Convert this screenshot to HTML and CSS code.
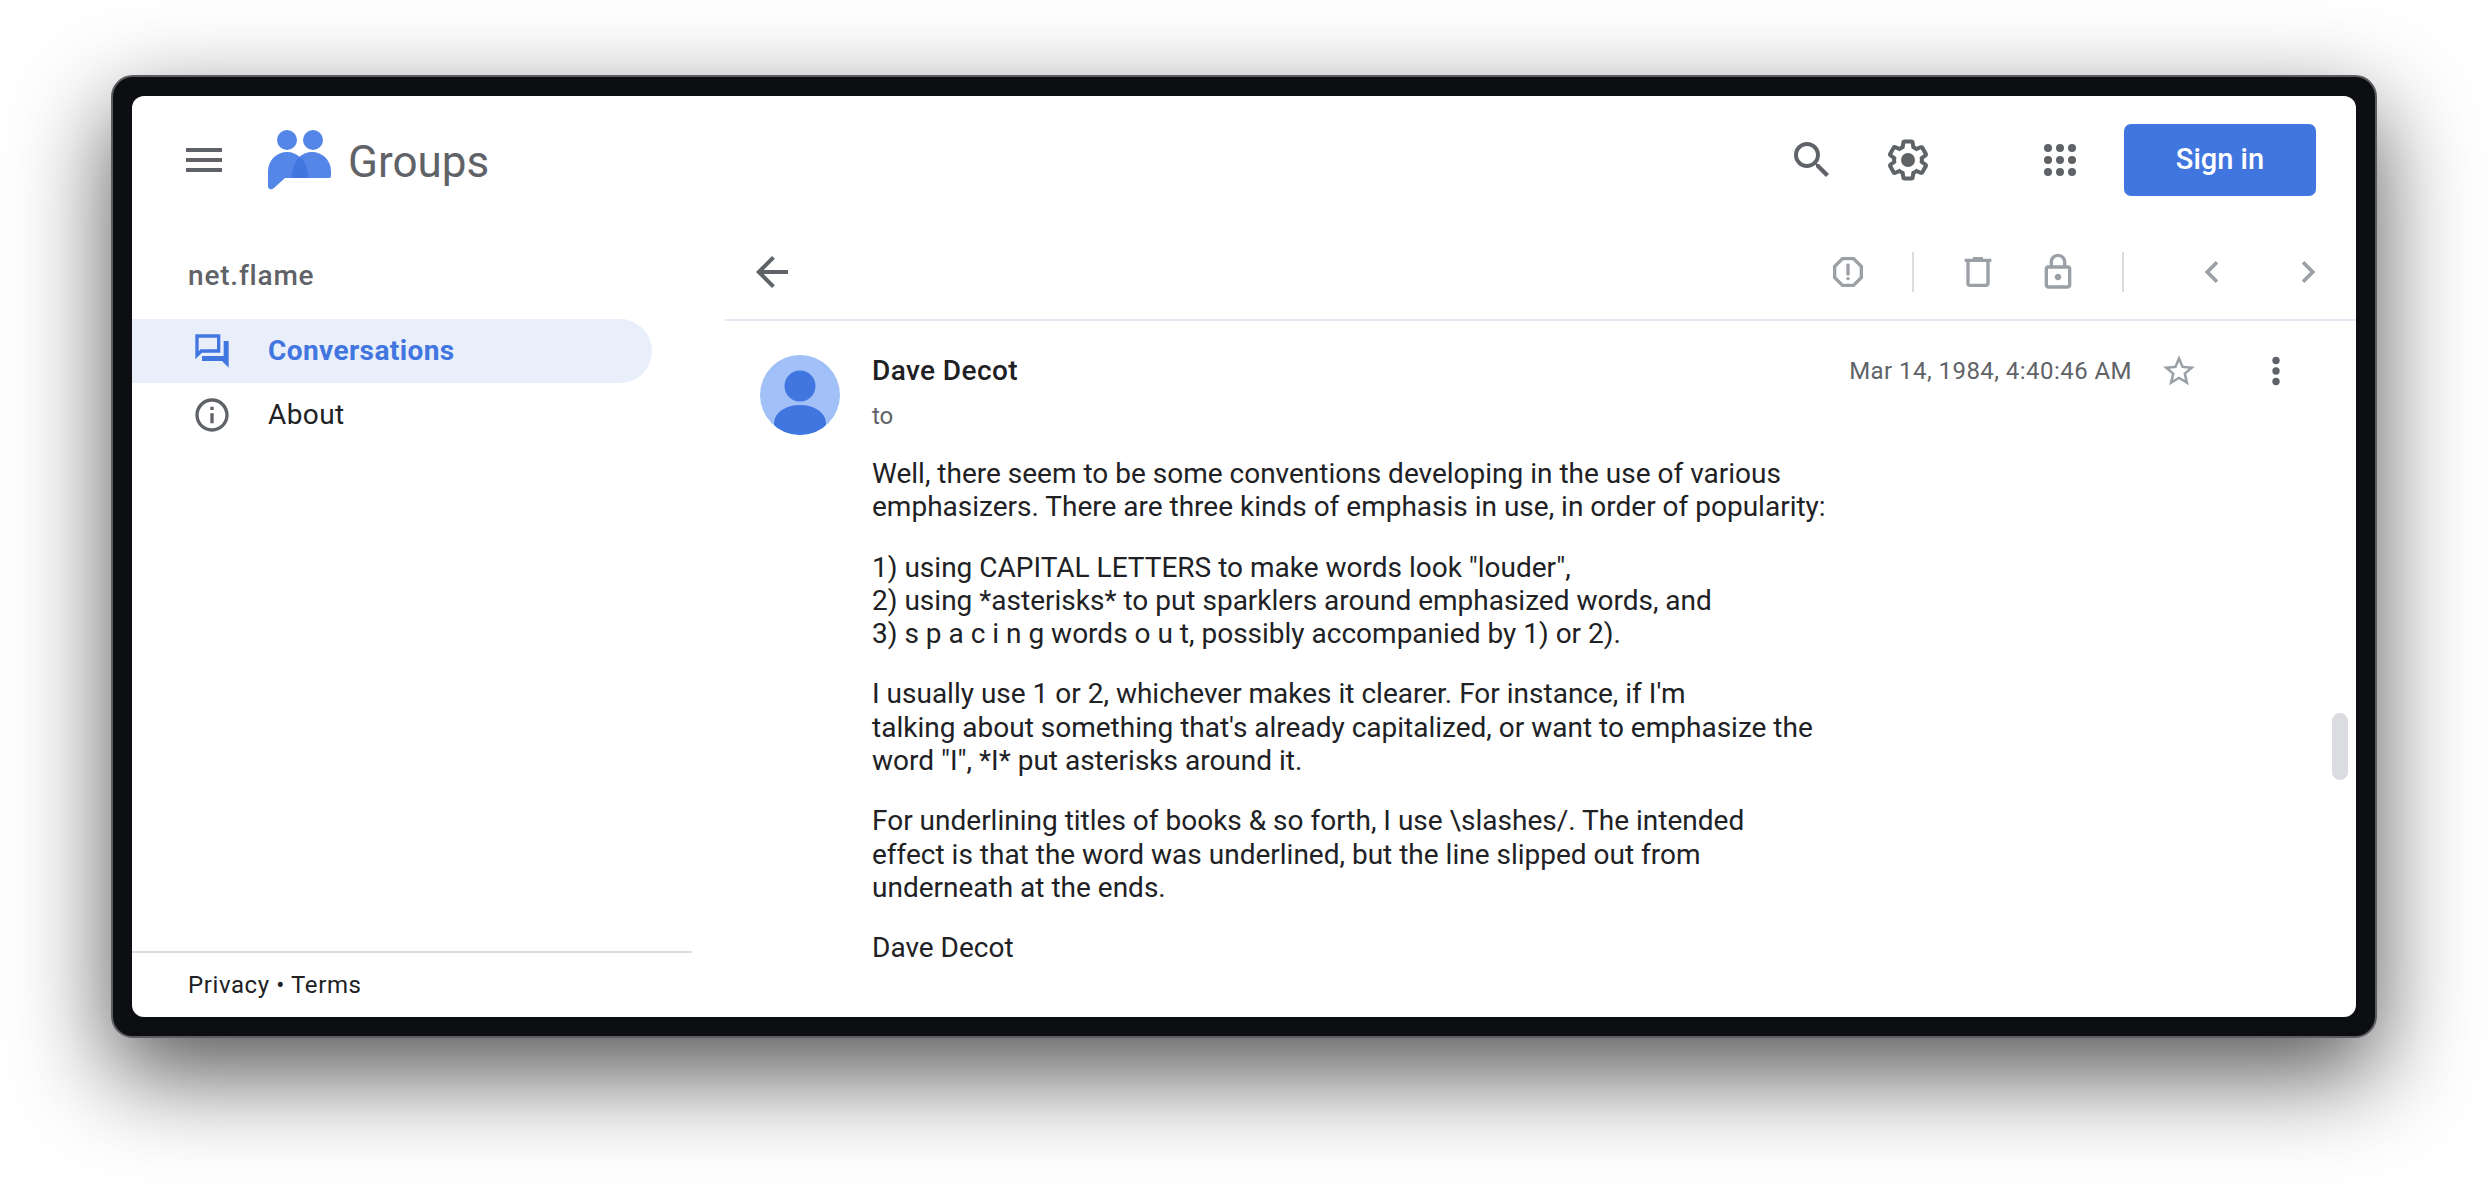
FILE: index.html
```html
<!DOCTYPE html>
<html lang="en">
<head>
<meta charset="utf-8">
<title>net.flame - Google Groups</title>
<link rel="stylesheet" href="styles.css">
</head>
<body>
<div class="frame">
  <div class="screen">
    <header class="topbar">
      <svg class="hamburger" viewBox="0 0 36 24"><path d="M0 0h36v4H0zM0 10h36v4H0zM0 20h36v4H0z"/></svg>
      <svg class="logo" viewBox="0 0 63 60">
        <circle class="logo-soft" cx="19" cy="10" r="10"/>
        <circle class="logo-soft" cx="45" cy="10" r="10"/>
        <path class="logo-soft" d="M25 48V41a19 19 0 0 1 38 0v5a2 2 0 0 1-2 2z"/>
        <path class="logo-soft" d="M0 41a19 19 0 0 1 38 0v7H17L6 58c-2 2-6 2-6-2z"/>
        <path class="logo-deep" d="M32 27c-5 4-8 11-8 21h16c0-10-3-17-8-21z"/>
      </svg>
      <span class="brand">Groups</span>
      <svg class="icon48 search" viewBox="0 0 24 24"><path d="M15.5 14h-.79l-.28-.27A6.471 6.471 0 0 0 16 9.5 6.5 6.5 0 1 0 9.5 16c1.61 0 3.09-.59 4.23-1.57l.27.28v.79l5 4.99L20.49 19l-4.99-5zm-6 0C7.01 14 5 11.99 5 9.5S7.01 5 9.5 5 14 7.01 14 9.5 11.99 14 9.5 14z"/></svg>
      <svg class="icon48 gear" viewBox="0 0 24 24"><path d="M13.85 22.25h-3.7c-.74 0-1.36-.54-1.45-1.27l-.27-1.89c-.27-.14-.53-.29-.79-.46l-1.8.72c-.7.26-1.47-.03-1.81-.65L2.2 15.53c-.35-.66-.2-1.44.36-1.88l1.53-1.19c-.01-.15-.02-.3-.02-.46 0-.15.01-.31.02-.46l-1.52-1.19c-.59-.45-.74-1.26-.37-1.88l1.85-3.19c.34-.62 1.11-.9 1.79-.63l1.81.73c.26-.17.52-.32.78-.46l.27-1.91c.09-.7.71-1.25 1.44-1.25h3.7c.74 0 1.36.54 1.45 1.27l.27 1.89c.27.14.53.29.79.46l1.8-.72c.71-.26 1.48.03 1.82.65l1.84 3.18c.36.66.2 1.44-.36 1.88l-1.52 1.19c.01.15.02.3.02.46s-.01.31-.02.46l1.52 1.19c.56.45.72 1.23.37 1.86l-1.86 3.22c-.34.62-1.11.9-1.8.63l-1.8-.72c-.26.17-.52.32-.78.46l-.27 1.91c-.1.68-.72 1.22-1.46 1.22zm-3.23-2h2.76l.37-2.55.53-.22c.44-.18.88-.44 1.34-.78l.45-.34 2.38.96 1.38-2.4-2.03-1.58.07-.56c.03-.26.06-.51.06-.78s-.03-.53-.06-.78l-.07-.56 2.03-1.58-1.39-2.4-2.39.96-.45-.35c-.42-.32-.87-.58-1.33-.77l-.52-.22-.37-2.55h-2.76l-.37 2.55-.53.21c-.44.19-.88.44-1.34.79l-.45.33-2.38-.95-1.39 2.39 2.03 1.58-.07.56a7 7 0 0 0-.06.79c0 .26.02.53.06.78l.07.56-2.03 1.58 1.38 2.4 2.39-.96.45.35c.43.33.86.58 1.33.77l.53.22.38 2.55z"/><circle cx="12" cy="12" r="3.5"/></svg>
      <svg class="icon48 apps" viewBox="0 0 24 24"><circle cx="6" cy="6" r="2"/><circle cx="12" cy="6" r="2"/><circle cx="18" cy="6" r="2"/><circle cx="6" cy="12" r="2"/><circle cx="12" cy="12" r="2"/><circle cx="18" cy="12" r="2"/><circle cx="6" cy="18" r="2"/><circle cx="12" cy="18" r="2"/><circle cx="18" cy="18" r="2"/></svg>
      <button class="signin" type="button">Sign in</button>
    </header>
    <div class="body">
      <aside class="sidebar">
        <div class="group-name">net.flame</div>
        <nav class="nav">
          <a class="nav-item active">
            <svg class="nav-icon" viewBox="0 0 24 24"><path d="M15 4v7H5.17L4 12.17V4h11m2-2H2v15l4-4h11V2zm5 4h-3v9H6v3h12l4 4V6z"/></svg>
            <span class="nav-label">Conversations</span>
          </a>
          <a class="nav-item">
            <svg class="nav-icon" viewBox="0 0 24 24"><path d="M11 7h2v2h-2zm0 4h2v6h-2zm1-9C6.48 2 2 6.48 2 12s4.48 10 10 10 10-4.48 10-10S17.52 2 12 2zm0 18c-4.41 0-8-3.59-8-8s3.59-8 8-8 8 3.59 8 8-3.59 8-8 8z"/></svg>
            <span class="nav-label">About</span>
          </a>
        </nav>
        <footer class="side-foot">Privacy • Terms</footer>
      </aside>
      <main class="main">
        <div class="toolbar">
          <svg class="icon48 back" viewBox="0 0 24 24"><path d="M20 11H7.83l5.59-5.59L12 4l-8 8 8 8 1.41-1.41L7.83 13H20v-2z"/></svg>
          <svg class="tool report" viewBox="0 0 24 24"><path d="M15.73 3H8.27L3 8.27v7.46L8.27 21h7.46L21 15.73V8.27L15.73 3zM19 14.9L14.9 19H9.1L5 14.9V9.1L9.1 5h5.8L19 9.1v5.8z"/><circle cx="12" cy="16" r="1"/><path d="M11 7h2v7h-2z"/></svg>
          <span class="sep"></span>
          <svg class="tool trash" viewBox="0 0 24 24"><path d="M15 4V3H9v1H4v2h1v13c0 1.1.9 2 2 2h10c1.1 0 2-.9 2-2V6h1V4h-5zm2 15H7V6h10v13z"/></svg>
          <svg class="tool lock" viewBox="0 0 24 24"><path d="M18 8h-1V6c0-2.76-2.24-5-5-5S7 3.24 7 6v2H6c-1.1 0-2 .9-2 2v10c0 1.1.9 2 2 2h12c1.1 0 2-.9 2-2V10c0-1.1-.9-2-2-2zM9 6c0-1.66 1.34-3 3-3s3 1.34 3 3v2H9V6zm9 14H6V10h12v10zm-6-3c1.1 0 2-.9 2-2s-.9-2-2-2-2 .9-2 2 .9 2 2 2z"/></svg>
          <span class="sep"></span>
          <svg class="tool prev" viewBox="0 0 24 24"><path d="M15.41 7.41L14 6l-6 6 6 6 1.41-1.41L10.83 12z"/></svg>
          <svg class="tool next" viewBox="0 0 24 24"><path d="M10 6L8.59 7.41 13.17 12l-4.58 4.59L10 18l6-6z"/></svg>
        </div>
        <article class="message">
          <svg class="avatar" viewBox="0 0 80 80">
            <defs><clipPath id="avatar-clip"><circle cx="40" cy="40" r="40"/></clipPath></defs>
            <circle class="avatar-bg" cx="40" cy="40" r="40"/>
            <g clip-path="url(#avatar-clip)">
              <circle class="avatar-fg" cx="40" cy="31" r="15.5"/>
              <ellipse class="avatar-fg" cx="40" cy="68" rx="26" ry="18"/>
            </g>
          </svg>
          <div class="content">
            <div class="head">
              <span class="author">Dave Decot</span>
              <span class="date">Mar 14, 1984, 4:40:46 AM</span>
              <svg class="star" viewBox="0 0 24 24"><path d="M22 9.24l-7.19-.62L12 2 9.19 8.63 2 9.24l5.46 4.73L5.82 21 12 17.27 18.18 21l-1.63-7.03L22 9.24zM12 15.4l-3.76 2.27 1-4.28-3.32-2.88 4.38-.38L12 6.1l1.71 4.04 4.38.38-3.32 2.88 1 4.28L12 15.4z"/></svg>
              <svg class="kebab" viewBox="0 0 24 24"><circle cx="12" cy="6" r="2.1"/><circle cx="12" cy="12" r="2.1"/><circle cx="12" cy="18" r="2.1"/></svg>
            </div>
            <div class="recipient">to</div>
            <div class="text">
              <p>Well, there seem to be some conventions developing in the use of various<br>emphasizers. There are three kinds of emphasis in use, in order of popularity:</p>
              <p>1) using CAPITAL LETTERS to make words look "louder",<br>2) using *asterisks* to put sparklers around emphasized words, and<br>3) s p a c i n g words o u t, possibly accompanied by 1) or 2).</p>
              <p>I usually use 1 or 2, whichever makes it clearer. For instance, if I'm<br>talking about something that's already capitalized, or want to emphasize the<br>word "I", *I* put asterisks around it.</p>
              <p>For underlining titles of books &amp; so forth, I use \slashes/. The intended<br>effect is that the word was underlined, but the line slipped out from<br>underneath at the ends.</p>
              <p>Dave Decot</p>
            </div>
          </div>
        </article>
        <div class="scrollbar"></div>
      </main>
    </div>
  </div>
</div>
</body>
</html>
```
FILE: styles.css
```css
* { box-sizing: border-box; }
html, body { margin: 0; height: 100%; }
body {
  background: #fff;
  padding: 75px 111px;
  overflow: hidden;
  font-family: Roboto, "Liberation Sans", sans-serif;
  color: #202124;
}
.frame {
  width: 2266px;
  height: 963px;
  background: #0d0e12;
  border: 2px solid #5c5d60;
  border-radius: 22px;
  padding: 19px;
  box-shadow: 0 36px 96px rgba(0, 0, 0, .67);
}
.screen {
  width: 2224px;
  height: 921px;
  background: #fff;
  border-radius: 12px;
  overflow: hidden;
  display: flex;
  flex-direction: column;
}
.topbar {
  height: 128px;
  flex: none;
  display: flex;
  align-items: center;
  padding: 0 40px 0 54px;
}
.hamburger { width: 36px; height: 24px; fill: #5f6368; }
.logo { width: 63px; height: 60px; margin-left: 46px; }
.logo-soft { fill: #5486e8; }
.logo-deep { fill: #4175e0; }
.brand {
  margin: 3px 0 0 17px;
  font-size: 44px;
  line-height: 60px;
  color: #5f6368;
}
.icon48 { width: 48px; height: 48px; flex: none; fill: #5f6368; }
.search { margin-left: auto; }
.gear { margin-left: 48px; }
.apps { margin-left: 104px; }
.signin {
  margin-left: 40px;
  width: 192px;
  height: 72px;
  padding: 0 0 2px;
  border: 0;
  border-radius: 7px;
  background: #4175e0;
  color: #fff;
  font: 500 29px Roboto, sans-serif;
}
.body { flex: 1; display: flex; min-height: 0; }
.sidebar {
  width: 560px;
  flex: none;
  display: flex;
  flex-direction: column;
}
.group-name {
  padding: 35px 0 0 56px;
  font-size: 28px;
  line-height: 33px;
  font-weight: 500;
  letter-spacing: .8px;
  color: #5f6368;
}
.nav { margin-top: 27px; }
.nav-item {
  width: 520px;
  height: 64px;
  display: flex;
  align-items: center;
  gap: 36px;
  padding-left: 60px;
  border-radius: 0 32px 32px 0;
  font-size: 28px;
  letter-spacing: .4px;
}
.nav-label { padding-bottom: 2px; }
.nav-icon { width: 40px; height: 40px; flex: none; fill: #5f6368; }
.nav-item.active { background: #e9eefb; color: #4175e0; font-weight: 700; }
.nav-item.active .nav-icon { fill: #4175e0; }
.side-foot {
  margin-top: auto;
  height: 66px;
  border-top: 2px solid #dadce0;
  padding-left: 56px;
  display: flex;
  align-items: center;
  font-size: 24px;
  letter-spacing: .6px;
}
.main { flex: 1; margin-left: 33px; position: relative; min-width: 0; }
.toolbar {
  height: 97px;
  border-bottom: 2px solid #e6e9f3;
  display: flex;
  align-items: center;
  padding: 0 26px 0 23px;
}
.tool { width: 40px; height: 40px; flex: none; fill: #9aa0a6; }
.report { margin-left: auto; }
.sep { width: 2px; height: 40px; background: #dadce0; margin-left: 44px; flex: none; }
.trash { margin-left: 44px; }
.lock { margin-left: 40px; }
.prev { width: 44px; height: 44px; margin-left: 66px; }
.next { width: 44px; height: 44px; margin-left: 52px; }
.message { display: flex; gap: 32px; padding: 31px 0 0 35px; }
.avatar { width: 80px; height: 80px; margin-top: 3px; flex: none; }
.avatar-bg { fill: #a1c0f8; }
.avatar-fg { fill: #4175e0; }
.content { flex: 1; min-width: 0; }
.head { height: 38px; display: flex; align-items: center; }
.author { padding-bottom: 2px; font-size: 28px; line-height: 33px; font-weight: 500; letter-spacing: .4px; }
.date {
  margin-left: auto;
  padding-bottom: 1px;
  font-size: 24px;
  letter-spacing: .45px;
  color: #5f6368;
}
.star { width: 38px; height: 38px; margin-left: 28px; fill: #9aa0a6; flex: none; }
.kebab { width: 42px; height: 42px; margin: 0 59px 0 57px; fill: #5f6368; flex: none; }
.recipient { margin-top: 10px; font-size: 24px; line-height: 33px; color: #5f6368; }
.text { margin-top: 24px; font-size: 28px; line-height: 33.3px; }
.text p { margin: 0 0 27px; }
.scrollbar {
  position: absolute;
  right: 8px;
  top: 489px;
  width: 16px;
  height: 67px;
  border-radius: 8px;
  background: #dadce0;
}
```
